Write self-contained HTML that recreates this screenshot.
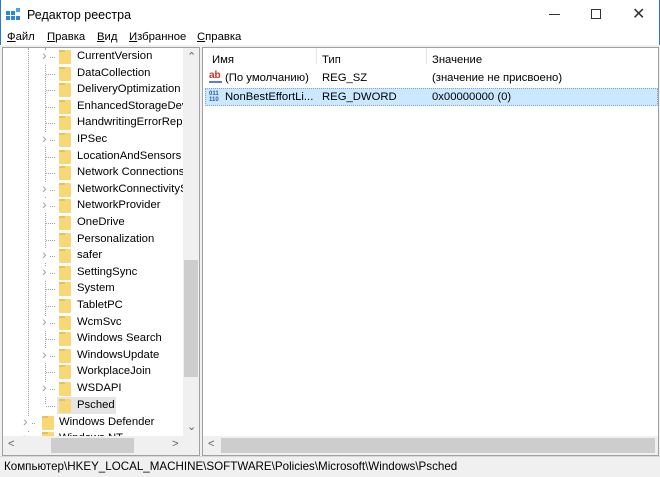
<!DOCTYPE html><html><head><meta charset="utf-8"><style>
*{margin:0;padding:0;box-sizing:border-box}
body{width:660px;height:477px;overflow:hidden;background:#fff;font-family:"Liberation Sans","DejaVu Sans",sans-serif;font-size:11.3px;color:#000;position:relative}
.a{position:absolute;white-space:nowrap}
.fold{position:absolute;width:12px;height:14px;background:#f8d775;border-radius:1px}
.fold:after{content:"";position:absolute;left:0;top:0;width:6px;height:2px;background:#e8c060}
.dot{position:absolute;border-top:1px dotted #a0a0a0;width:9px}
.chev{position:absolute;color:#a0a0a0;font-size:14px;line-height:14px}
</style></head><body>
<div class="a" style="left:0;top:0;width:660px;height:477px;border:1px solid #2b79d6;border-top:none"></div>
<svg class="a" style="left:6px;top:7px" width="16" height="16"><rect x="0" y="4" width="4" height="4" fill="#2b88d8"/><rect x="5" y="4" width="4" height="4" fill="#2b88d8"/><rect x="0" y="9" width="4" height="4" fill="#2b88d8"/><rect x="5" y="9" width="4" height="4" fill="#2b88d8"/><rect x="10" y="9" width="4" height="4" fill="#2b88d8"/><rect x="10" y="1" width="4" height="4" fill="#4aa3e8"/></svg>
<div class="a" style="left:27px;top:8px;font-size:12.5px">Редактор реестра</div>
<div class="a" style="left:549px;top:14px;width:11px;border-top:1px solid #333"></div>
<div class="a" style="left:591px;top:9px;width:10px;height:10px;border:1px solid #333"></div>
<div class="a" style="left:632px;top:4px;font-size:16px;color:#333">✕</div>
<div class="a" style="left:7px;top:31px"><u>Ф</u>айл</div>
<div class="a" style="left:47px;top:31px"><u>П</u>равка</div>
<div class="a" style="left:97px;top:31px"><u>В</u>ид</div>
<div class="a" style="left:129px;top:31px"><u>И</u>збранное</div>
<div class="a" style="left:197px;top:31px"><u>С</u>правка</div>
<div class="a" style="left:0;top:45px;width:660px;height:412px;background:#f0f0f0"></div>
<div class="a" style="left:2px;top:47px;width:198px;height:409px;background:#fff;border:1px solid #a0a0a0;overflow:hidden"></div>
<div class="a" style="left:202px;top:47px;width:457px;height:409px;background:#fff;border:1px solid #a0a0a0"></div>
<div class="a" style="left:3px;top:48px;width:180px;height:388px;overflow:hidden">
<div class="a" style="left:25px;top:0;height:388px;border-left:1px dotted #a0a0a0"></div>
<div class="a" style="left:54px;top:349px;width:59px;height:17px;background:#e5e5e5"></div>
</div>
<div class="a" style="left:0;top:48px;width:183px;height:388px;overflow:hidden">
<div class="a" style="left:45px;top:0;height:356px;border-left:1px dotted #a0a0a0"></div>
<script>
var n=["CurrentVersion","DataCollection","DeliveryOptimization","EnhancedStorageDevices","HandwritingErrorReports","IPSec","LocationAndSensors","Network Connections","NetworkConnectivityStatus","NetworkProvider","OneDrive","Personalization","safer","SettingSync","System","TabletPC","WcmSvc","Windows Search","WindowsUpdate","WorkplaceJoin","WSDAPI","Psched"];
var ex=[0,5,8,9,12,13,16,18,20];var h="";
for(var i=0;i<n.length;i++){var y=i*16.6+1;h+='<div class="dot" style="left:46px;top:'+(y+8)+'px"></div><div class="fold" style="left:59px;top:'+(y+1)+'px"></div><div class="a" style="left:77px;top:'+(y+1)+'px">'+n[i]+'</div>';if(ex.indexOf(i)>=0)h+='<div class="a" style="left:40px;top:'+(y+1)+'px;width:10px;height:14px;background:#fff"></div><div class="chev" style="left:42px;top:'+(y-1)+'px">›</div>';}
var y2=[366.6,383.2];var t=["Windows Defender","Windows NT"];
for(var j=0;j<2;j++){h+='<div class="dot" style="left:26px;top:'+(y2[j]+8)+'px"></div><div class="a" style="left:21px;top:'+(y2[j]+1)+'px;width:10px;height:14px;background:#fff"></div><div class="chev" style="left:23px;top:'+(y2[j]-1)+'px">›</div><div class="fold" style="left:42px;top:'+(y2[j]+1)+'px"></div><div class="a" style="left:59px;top:'+(y2[j]+1)+'px">'+t[j]+'</div>';}
document.write(h);
</script>
</div>
<div class="a" style="left:183px;top:48px;width:16px;height:388px;background:#f0f0f0"></div>
<div class="a" style="left:184px;top:260px;width:14px;height:117px;background:#cdcdcd"></div>
<div class="a" style="left:187px;top:50px;color:#606060;font-size:11px">⌃</div>
<div class="a" style="left:187px;top:420px;color:#606060;font-size:11px">⌄</div>
<div class="a" style="left:3px;top:436px;width:196px;height:19px;background:#f0f0f0"></div>
<div class="a" style="left:51px;top:438px;width:83px;height:15px;background:#cdcdcd"></div>
<div class="a" style="left:8px;top:438px;color:#606060">&lt;</div>
<div class="a" style="left:172px;top:438px;color:#606060">&gt;</div>
<div class="a" style="left:203px;top:436px;width:455px;height:19px;background:#f0f0f0"></div>
<div class="a" style="left:221px;top:438px;width:434px;height:15px;background:#cdcdcd"></div>
<div class="a" style="left:208px;top:438px;color:#606060">&lt;</div>
<div class="a" style="left:316px;top:48px;height:16px;border-left:1px solid #e5e5e5"></div>
<div class="a" style="left:426px;top:48px;height:16px;border-left:1px solid #e5e5e5"></div>
<div class="a" style="left:212px;top:54px">Имя</div>
<div class="a" style="left:322px;top:54px">Тип</div>
<div class="a" style="left:432px;top:54px">Значение</div>
<div class="a" style="left:209px;top:71px;width:13px;height:12px;color:#d03020;font-size:10px;font-weight:bold;line-height:10px;border-bottom:2px solid #6080c0">ab</div>
<div class="a" style="left:225px;top:72px">(По умолчанию)</div>
<div class="a" style="left:322px;top:72px">REG_SZ</div>
<div class="a" style="left:432px;top:72px">(значение не присвоено)</div>
<div class="a" style="left:205px;top:88px;width:453px;height:18px;background:#cce8ff;border:1px dotted #7aa7d8"></div>
<div class="a" style="left:209px;top:91px;width:12px;height:12px;color:#2a5bb0;font-size:6px;line-height:6px;font-weight:bold">011<br>110</div>
<div class="a" style="left:225px;top:91px">NonBestEffortLi...</div>
<div class="a" style="left:322px;top:91px">REG_DWORD</div>
<div class="a" style="left:432px;top:91px">0x00000000 (0)</div>
<div class="a" style="left:0;top:456px;width:660px;height:21px;background:#f0f0f0;border-top:1px solid #d8d8d8"></div>
<div class="a" style="left:4px;top:460px;font-size:11.6px">Компьютер\HKEY_LOCAL_MACHINE\SOFTWARE\Policies\Microsoft\Windows\Psched</div>
</body></html>
